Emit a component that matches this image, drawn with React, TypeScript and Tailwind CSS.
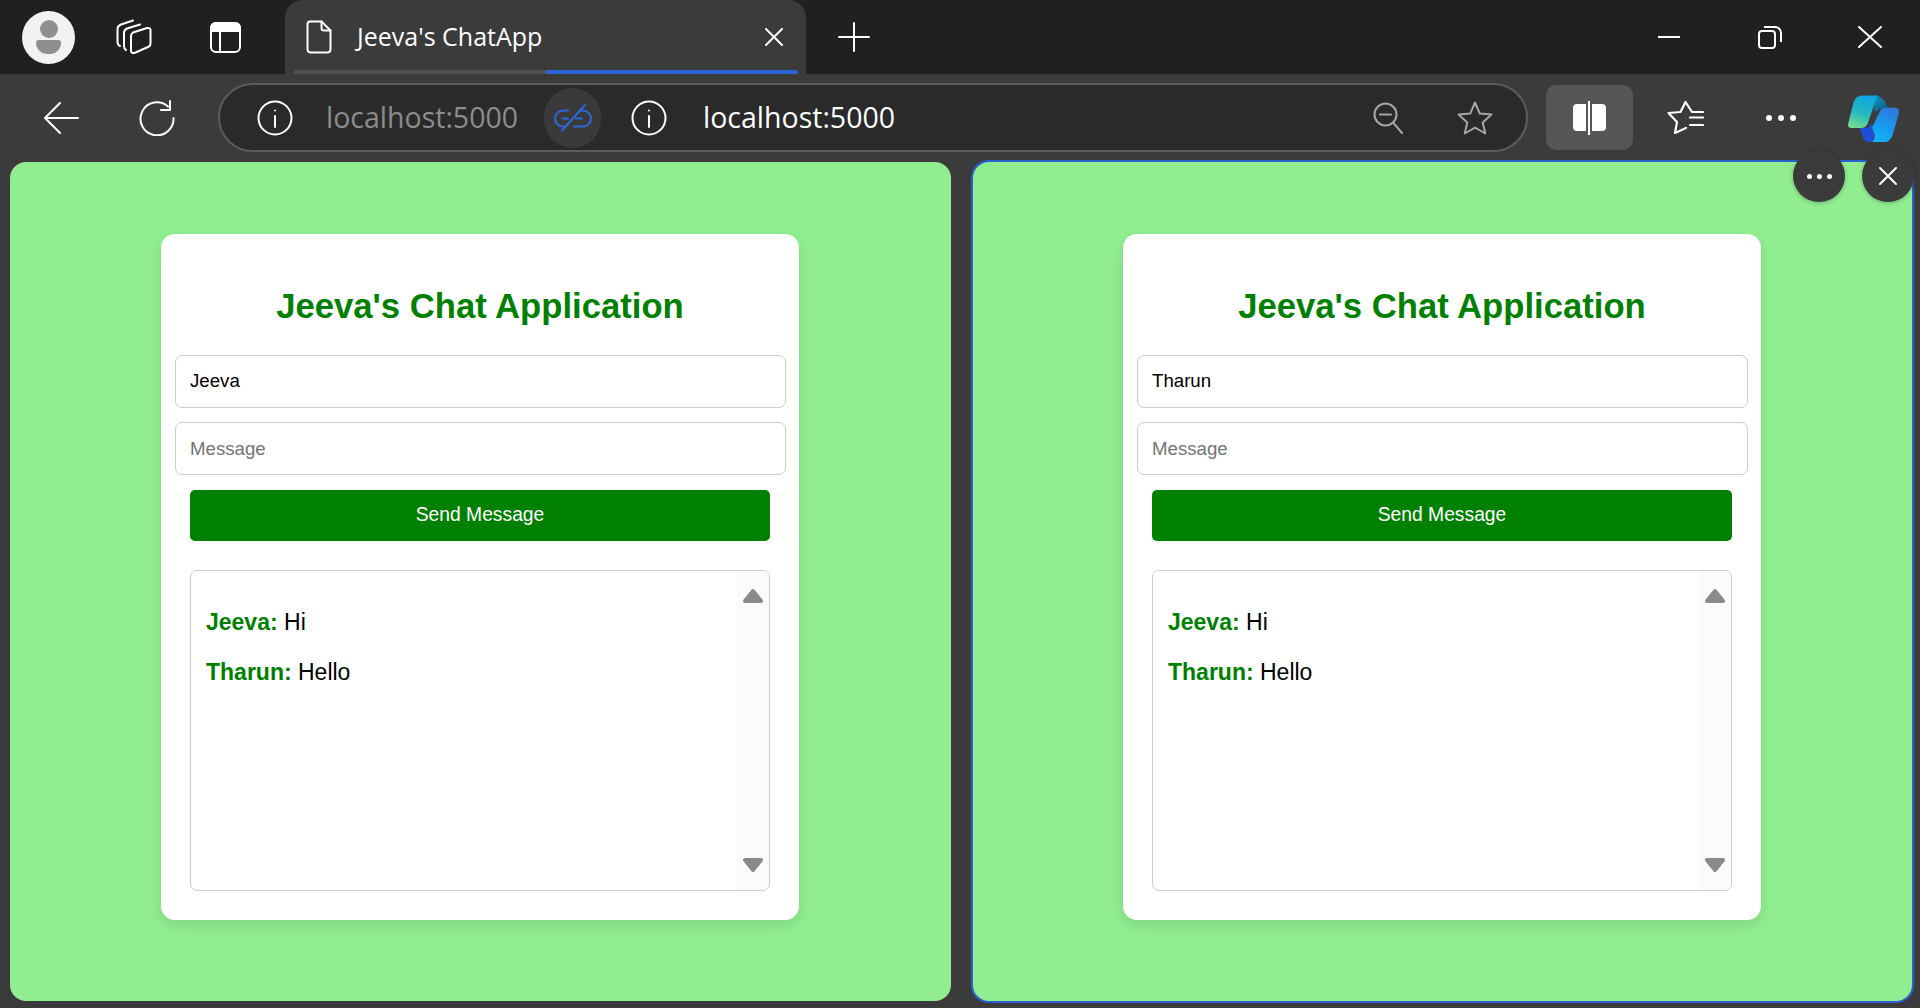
const sans = "font-['Liberation_Sans',Arial,sans-serif]";
const ui = "font-['Open_Sans',sans-serif]";

function Stroke({ w, h, className, children }: { w: number; h: number; className?: string; children: React.ReactNode }) {
  return (
    <svg width={w} height={h} viewBox={`0 0 ${w} ${h}`} fill="none" stroke="currentColor" strokeLinecap="round" strokeLinejoin="round" strokeWidth={2} className={`shrink-0 ${className ?? ""}`}>
      {children}
    </svg>
  );
}

function InfoIcon() {
  return (
    <Stroke w={36} h={36} className="text-white">
      <circle cx="18" cy="18" r="16.5" />
      <path d="M18 16v11" />
      <circle cx="18" cy="10.5" r="1" fill="currentColor" stroke="none" />
    </Stroke>
  );
}

function Dots({ size = 5, gap = "gap-[6px]" }: { size?: number; gap?: string }) {
  return (
    <div className={`flex ${gap}`}>
      {[0, 1, 2].map((i) => (
        <span key={i} className="rounded-full bg-white" style={{ width: size, height: size }} />
      ))}
    </div>
  );
}

function CopilotLogo() {
  return (
    <svg width={53} height={48} viewBox="0 0 160 144" className="shrink-0">
      <defs>
        <linearGradient id="cpLeft" x1="0.6" y1="0" x2="0.3" y2="1">
          <stop offset="0" stopColor="#0ea5e4" />
          <stop offset="0.55" stopColor="#27b9bd" />
          <stop offset="1" stopColor="#72dc92" />
        </linearGradient>
        <linearGradient id="cpRight" x1="0.7" y1="0" x2="0.3" y2="1">
          <stop offset="0" stopColor="#3277dc" />
          <stop offset="0.6" stopColor="#149ff0" />
          <stop offset="1" stopColor="#17b2fa" />
        </linearGradient>
        <linearGradient id="cpTop" x1="0" y1="0" x2="1" y2="1">
          <stop offset="0" stopColor="#0c93bd" />
          <stop offset="1" stopColor="#0d5a80" />
        </linearGradient>
      </defs>
      <path d="M84 4Q108 6 116 26L124 42H106Q96 42 92 52L82 50Z" fill="url(#cpTop)" />
      <path d="M38 102H56Q66 102 70 90L86 100 78 146H70Q52 146 46 124Z" fill="#1f4dd4" />
      <path d="M20 24Q26 4 48 4H92L62 90Q56 102 42 102H12Q0 102 4 88Z" fill="url(#cpLeft)" />
      <path d="M100 50Q104 41 116 41H146Q160 41 156 60L138 122Q130 146 108 146H72Q82 144 84 124L76 100Z" fill="url(#cpRight)" />
    </svg>
  );
}

function TitleBar() {
  return (
    <div className="flex h-[74px] shrink-0 items-center bg-[#202020] text-white">
      <div className="ml-[22px] flex h-[53px] w-[53px] shrink-0 flex-col items-center justify-center rounded-full bg-[#f2f2f2]">
        <span className="h-[18px] w-[18px] rounded-full bg-[#8f8f8f]" />
        <span className="mt-[2px] h-[14px] w-[25px] rounded-b-[13px] rounded-t-[3px] bg-[#8f8f8f]" />
      </div>
      <Stroke w={36} h={36} className="ml-[41px]">
        <path d="M17 1.5 5 5.5Q1.5 7 1.5 10V23Q1.5 26 4 27" />
        <path d="M24 5.5 11 9.5Q8 11 8 14V27Q8 30 10 31" />
        <path d="M17 13.5 31 9Q34.5 8.5 34.5 11V24.5Q34.5 27 32 28L19.5 33.5Q15 35 15 31.5V17Q15 15 17 13.5Z" />
      </Stroke>
      <svg width={31} height={31} viewBox="0 0 31 31" fill="none" stroke="currentColor" strokeWidth={2} className="ml-[58px] shrink-0">
        <rect x="1" y="1" width="29" height="29" rx="5" />
        <path d="M1 9V6a5 5 0 0 1 5-5h19a5 5 0 0 1 5 5v3Z" fill="currentColor" />
        <path d="M10 9v21" />
      </svg>

      <div className="relative ml-[44px] flex h-full w-[521px] shrink-0 items-center rounded-t-[18px] bg-[#3b3b3b]">
        <Stroke w={26} h={34} className="ml-[21px]">
          <path d="M4 1.5H15.5L24.5 10.5V29Q24.5 32.5 21 32.5H5Q1.5 32.5 1.5 29V4Q1.5 1.5 4 1.5Z" />
          <path d="M15.5 1.5V8Q15.5 10.5 18 10.5H24.5" />
        </Stroke>
        <span className={`ml-[25px] text-[25px] text-white ${ui}`}>Jeeva's ChatApp</span>
        <Stroke w={20} h={18} className="ml-auto mr-[22px]">
          <path d="M2 1 18 17M18 1 2 17" />
        </Stroke>
        <div className="absolute bottom-0 left-[9px] right-[8px] flex h-[4px] overflow-hidden rounded-t-[2px]">
          <span className="w-[252px] bg-[#505050]" />
          <span className="flex-1 bg-[#2b63d3]" />
        </div>
      </div>

      <Stroke w={32} h={30} className="ml-[32px]">
        <path d="M16 1v28M1 15h30" />
      </Stroke>

      <div className="ml-auto mr-[38px] flex items-center">
        <span className="h-[2px] w-[22px] bg-white" />
        <svg width={24} height={23} viewBox="0 0 24 23" fill="none" stroke="currentColor" strokeWidth={2} className="ml-[78px]">
          <rect x="1" y="5" width="16" height="17" rx="3" />
          <path d="M6 1h11a6 6 0 0 1 6 6v9" />
        </svg>
        <Stroke w={24} h={22} className="ml-[76px]">
          <path d="M1 1 23 21M23 1 1 21" />
        </Stroke>
      </div>
    </div>
  );
}

function ToolBar() {
  return (
    <div className="flex h-[88px] shrink-0 items-center bg-[#3b3b3b] pb-[1px] text-white">
      <Stroke w={36} h={32} className="ml-[43px]">
        <path d="M35 16H2M17 1 2 16l15 15" />
      </Stroke>
      <Stroke w={36} h={36} className="ml-[60px]">
        <path d="M29 6.5A16.5 16.5 0 1 0 34.5 18" />
        <path d="M31 1v9h-9" />
      </Stroke>
      <div className="ml-[43px] flex h-[69px] w-[1310px] shrink-0 items-center rounded-full border-2 border-[#5c5c5c] bg-[#2a2a2a]">
        <div className="ml-[37px]">
          <InfoIcon />
        </div>
        <span className={`ml-[33px] w-[192px] whitespace-nowrap text-[28.5px] text-[#8c8c8c] ${ui}`}>localhost:5000</span>
        <div className="ml-[26px] flex h-[60px] w-[57px] shrink-0 items-center justify-center rounded-full bg-[#3a3a3a]">
          <svg width={40} height={30} viewBox="0 0 40 30" fill="none" stroke="#2d69dc" strokeWidth={2} strokeLinecap="round">
            <path d="M15 7.5H10a8 8 0 0 0 0 16h1" />
            <path d="M27 7.5h3a8 8 0 0 1 0 16h-9" />
            <path d="M10 15.5h5M23 15.5h6" />
            <path d="M32 2 9 27.5" />
          </svg>
        </div>
        <div className="ml-[30px]">
          <InfoIcon />
        </div>
        <span className={`ml-[36px] w-[192px] whitespace-nowrap text-[28.5px] text-white ${ui}`}>localhost:5000</span>
        <Stroke w={30} h={32} className="ml-[478px] text-[#a6a6a6]">
          <circle cx="12.5" cy="12.5" r="11" />
          <path d="M7 12.5h11M20.5 21 29 31" />
        </Stroke>
        <Stroke w={36} h={34} className="ml-[54px] text-[#a6a6a6]">
          <path d="M18 1.5 22.8 12.6 34.5 13.6 25.7 21.5 28.3 32.5 18 26.7 7.7 32.5 10.3 21.5 1.5 13.6 13.2 12.6Z" />
        </Stroke>
      </div>
      <div className="ml-[18px] flex h-[65px] w-[87px] shrink-0 items-center justify-center rounded-[10px] bg-[#565656]">
        <div className="flex h-[34px] items-center">
          <span className="h-[27px] w-[13px] rounded-l-[4px] bg-white" />
          <span className="mx-[2px] h-[34px] w-[2px] bg-white" />
          <span className="h-[27px] w-[14px] rounded-r-[4px] bg-white" />
        </div>
      </div>
      <Stroke w={37} h={36} className="ml-[34px]">
        <path d="M36 12H25L18.5 2 13.5 12 1.5 13 10 22 8 33 19 28" strokeWidth={2.2} />
        <path d="M23 17.5H36M23 25H36" strokeWidth={2.2} />
      </Stroke>
      <div className="ml-[62px]">
        <Dots size={6} gap="gap-[6px]" />
      </div>
      <div className="ml-[51px]">
        <CopilotLogo />
      </div>
    </div>
  );
}

function Triangle({ down }: { down?: boolean }) {
  return (
    <svg width={20} height={15} viewBox="0 0 20 15" className={down ? "rotate-180" : ""}>
      <path d="M10 3 18 13H2Z" fill="#8a8a8a" stroke="#8a8a8a" strokeWidth={4} strokeLinejoin="round" />
    </svg>
  );
}

function ChatCard({ name }: { name: string }) {
  return (
    <div className={`flex h-[686px] w-[638px] flex-col rounded-[14px] bg-white px-[14px] shadow-[0_5px_14px_rgba(0,0,0,0.1)] ${sans}`}>
      <h1 className="mt-[50px] h-[44px] text-center text-[34.67px] font-bold leading-[44px] text-[#008000]">Jeeva's Chat Application</h1>
      <input
        readOnly
        value={name}
        className="mt-[27px] h-[53px] w-[611px] rounded-[7px] border border-[#cccccc] bg-white px-[14px] pb-[2px] text-[18.67px] text-black outline-none"
      />
      <input
        readOnly
        placeholder="Message"
        className="mt-[14px] h-[53px] w-[611px] rounded-[7px] border border-[#cccccc] bg-white px-[14px] text-[18.67px] text-black outline-none placeholder:text-[#757575]"
      />
      <button className="mx-[15px] mt-[15px] h-[51px] w-[580px] rounded-[5px] bg-[#008000] text-[19.3px] text-white">Send Message</button>
      <div className="mx-[15px] mt-[29px] flex h-[321px] w-[580px] overflow-hidden rounded-[7px] border border-[#cccccc]">
        <div className="flex-1 px-[15px] pt-[36px] text-[23px] leading-[30px] text-black">
          <p>
            <strong className="text-[#008000]">Jeeva:</strong> Hi
          </p>
          <p className="mt-[20px]">
            <strong className="text-[#008000]">Tharun:</strong> Hello
          </p>
        </div>
        <div className="flex w-[32px] flex-col items-center justify-between bg-[#fbfbfb] pb-[17px] pt-[17px]">
          <Triangle />
          <Triangle down />
        </div>
      </div>
    </div>
  );
}

function Pane({ name, active }: { name: string; active?: boolean }) {
  return (
    <div
      className={
        active
          ? "-my-[2px] ml-[20px] flex h-[843px] w-[943px] shrink-0 justify-center rounded-[18px] border-2 border-[#2b5fd0] bg-[#90ee90] pr-[1px] pt-[72px]"
          : "flex h-[839px] w-[941px] shrink-0 justify-center rounded-[16px] bg-[#90ee90] pr-[1px] pt-[72px]"
      }
    >
      <ChatCard name={name} />
    </div>
  );
}

export default function App() {
  return (
    <div className="relative flex h-[1008px] w-[1920px] flex-col overflow-hidden bg-[#3b3b3b]">
      <TitleBar />
      <ToolBar />
      <div className="flex pl-[10px]">
        <Pane name="Jeeva" />
        <Pane name="Tharun" active />
      </div>
      <div className="absolute left-[1793px] top-[150px] flex gap-[17px]">
        <div className="flex h-[52px] w-[52px] items-center justify-center rounded-full bg-[#3b3b3b] shadow-[0_1px_4px_rgba(0,0,0,0.25)]">
          <Dots size={5} gap="gap-[5px]" />
        </div>
        <div className="flex h-[52px] w-[52px] items-center justify-center rounded-full bg-[#3b3b3b] text-white shadow-[0_1px_4px_rgba(0,0,0,0.25)]">
          <Stroke w={18} h={18}>
            <path d="M1 1 17 17M17 1 1 17" />
          </Stroke>
        </div>
      </div>
    </div>
  );
}
